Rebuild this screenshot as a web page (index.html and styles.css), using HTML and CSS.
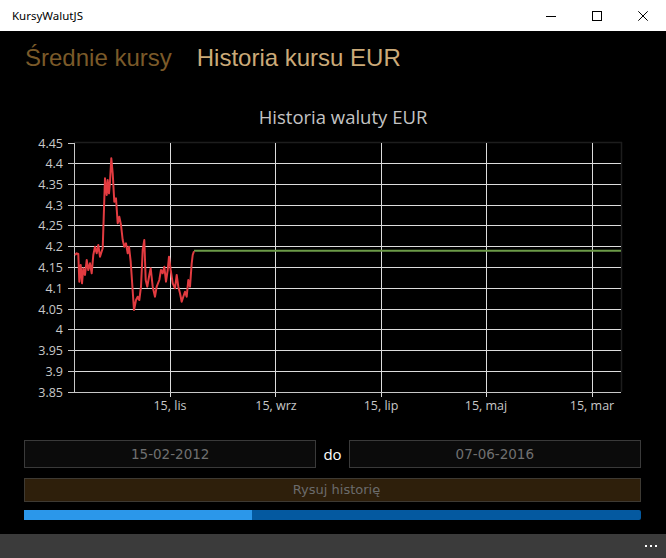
FILE: index.html
```html
<!DOCTYPE html>
<html lang="pl">
<head>
<meta charset="utf-8">
<title>KursyWalutJS</title>
<link rel="stylesheet" href="styles.css">
</head>
<body>
<div class="app">
  <header class="titlebar">
    <span class="app-title">KursyWalutJS</span>
    <div class="win-controls">
      <span class="win-btn"><svg width="10" height="10" viewBox="0 0 10 10"><line x1="0" y1="5.5" x2="10" y2="5.5" stroke="#000" stroke-width="1"/></svg></span>
      <span class="win-btn"><svg width="10" height="10" viewBox="0 0 10 10"><rect x="0.5" y="0.5" width="9" height="9" fill="none" stroke="#000" stroke-width="1"/></svg></span>
      <span class="win-btn"><svg width="10" height="10" viewBox="0 0 10 10"><path d="M0.3 0.3 L9.7 9.7 M9.7 0.3 L0.3 9.7" stroke="#000" stroke-width="1"/></svg></span>
    </div>
  </header>

  <nav class="tabs">
    <span class="tab tab-muted">Średnie kursy</span>
    <span class="tab tab-active">Historia kursu EUR</span>
  </nav>

  <svg class="chart" width="666" height="369" viewBox="0 71 666 369">
    <text class="chart-title" x="343" y="124">Historia waluty EUR</text>

    <g class="frame">
      <line x1="74" y1="142.5" x2="622" y2="142.5"/>
      <line x1="621.5" y1="142" x2="621.5" y2="392"/>
    </g>

    <g class="grid">
      <line x1="74" y1="163.5" x2="621" y2="163.5"/>
      <line x1="74" y1="184.5" x2="621" y2="184.5"/>
      <line x1="74" y1="205.5" x2="621" y2="205.5"/>
      <line x1="74" y1="225.5" x2="621" y2="225.5"/>
      <line x1="74" y1="246.5" x2="621" y2="246.5"/>
      <line x1="74" y1="267.5" x2="621" y2="267.5"/>
      <line x1="74" y1="288.5" x2="621" y2="288.5"/>
      <line x1="74" y1="309.5" x2="621" y2="309.5"/>
      <line x1="74" y1="329.5" x2="621" y2="329.5"/>
      <line x1="74" y1="350.5" x2="621" y2="350.5"/>
      <line x1="74" y1="371.5" x2="621" y2="371.5"/>
      <line x1="170.5" y1="143" x2="170.5" y2="397"/>
      <line x1="275.5" y1="143" x2="275.5" y2="397"/>
      <line x1="381.5" y1="143" x2="381.5" y2="397"/>
      <line x1="486.5" y1="143" x2="486.5" y2="397"/>
      <line x1="592.5" y1="143" x2="592.5" y2="397"/>
    </g>

    <g class="axis">
      <line x1="74.5" y1="143" x2="74.5" y2="393"/>
      <line x1="74" y1="392.5" x2="621" y2="392.5"/>
      <line x1="68" y1="143.5" x2="74" y2="143.5"/>
      <line x1="68" y1="163.5" x2="74" y2="163.5"/>
      <line x1="68" y1="184.5" x2="74" y2="184.5"/>
      <line x1="68" y1="205.5" x2="74" y2="205.5"/>
      <line x1="68" y1="225.5" x2="74" y2="225.5"/>
      <line x1="68" y1="246.5" x2="74" y2="246.5"/>
      <line x1="68" y1="267.5" x2="74" y2="267.5"/>
      <line x1="68" y1="288.5" x2="74" y2="288.5"/>
      <line x1="68" y1="309.5" x2="74" y2="309.5"/>
      <line x1="68" y1="329.5" x2="74" y2="329.5"/>
      <line x1="68" y1="350.5" x2="74" y2="350.5"/>
      <line x1="68" y1="371.5" x2="74" y2="371.5"/>
      <line x1="68" y1="392.5" x2="74" y2="392.5"/>
    </g>

    <g class="ylabels">
      <text x="63" y="143.5">4.45</text>
      <text x="63" y="163.5">4.4</text>
      <text x="63" y="184.5">4.35</text>
      <text x="63" y="205.5">4.3</text>
      <text x="63" y="225.5">4.25</text>
      <text x="63" y="246.5">4.2</text>
      <text x="63" y="267.5">4.15</text>
      <text x="63" y="288.5">4.1</text>
      <text x="63" y="309.5">4.05</text>
      <text x="63" y="329.5">4</text>
      <text x="63" y="350.5">3.95</text>
      <text x="63" y="371.5">3.9</text>
      <text x="63" y="392.5">3.85</text>
    </g>

    <g class="xlabels">
      <text x="170" y="410">15, lis</text>
      <text x="276" y="410">15, wrz</text>
      <text x="381" y="410">15, lip</text>
      <text x="486" y="410">15, maj</text>
      <text x="592" y="410">15, mar</text>
    </g>

    <line class="series-green" x1="194" y1="250.8" x2="621" y2="250.8"/>
    <polyline class="series-red" points="75,255 76.7,253.3 78.3,254 79.3,281.7 80.7,265 82,283.3 83.3,268.3 85,275 86.7,260 88.3,270 90,263.3 91.7,273.3 93.3,255 95,246.7 96.7,253.3 98.3,245 100,256.7 102.7,248.3 105,178.3 106.7,195 107.7,180 109,193.3 110,181.7 111.3,158.3 112.7,173.3 114.3,201.7 116,198.3 117.7,223.3 119.3,216.7 121,225 122.7,240 124.3,246.7 126,243.3 127.7,253.3 129,246.7 130.7,261.7 134,310 136,300 137.7,296.7 139.3,300 141,286.7 142.7,250 144.3,240 145.7,280 147.3,286.7 149.3,275 150.7,268.3 152.7,286.7 155,296.7 156.7,286.7 159.3,280 161,270 162.7,273.3 164.3,266.7 166,281.7 167.7,270 169,256.7 170.7,270 172.7,283.3 175,288.3 176.7,275 178.3,286.7 180,293.3 181.7,301.7 183.3,296.7 185,291.7 186.7,296.7 188.3,280 190,286.7 191.7,263.3 192.7,255 194,251.2"/>
  </svg>

  <section class="controls">
    <div class="date-row">
      <div class="date-input">15-02-2012</div>
      <span class="date-sep">do</span>
      <div class="date-input">07-06-2016</div>
    </div>
    <button class="draw-btn" type="button">Rysuj historię</button>
    <div class="progress"><div class="progress-fill" style="width:36.95%"></div></div>
  </section>

  <footer class="appbar">
    <span class="more"><i></i><i></i><i></i></span>
  </footer>
</div>
</body>
</html>
```

FILE: styles.css
```css
* { box-sizing: border-box; }

html, body {
  margin: 0;
  padding: 0;
  background: #000;
}

.app {
  width: 666px;
  height: 558px;
  display: flex;
  flex-direction: column;
  overflow: hidden;
  background: #000;
}

.titlebar {
  height: 31px;
  flex: 0 0 31px;
  background: #fff;
  display: flex;
  align-items: center;
  justify-content: space-between;
}

.app-title {
  font-family: "Noto Sans", "Open Sans", sans-serif;
  font-size: 11.5px;
  color: #000;
  padding-left: 12px;
  padding-bottom: 1px;
}

.win-controls {
  display: flex;
  height: 31px;
}

.win-btn {
  width: 46px;
  height: 31px;
  display: flex;
  align-items: center;
  justify-content: center;
}

.win-btn svg { display: block; }

.tabs {
  display: flex;
  gap: 25px;
  padding: 13px 0 0 25px;
  height: 40px;
  flex: 0 0 40px;
  font-family: "Liberation Sans", Arial, sans-serif;
  font-size: 24px;
  line-height: 28px;
  white-space: nowrap;
}

.tab-muted { color: #7b5a29; }
.tab-active { color: #cbaa78; }

.chart {
  display: block;
  flex: 0 0 369px;
}

.chart-title {
  font-family: "Open Sans", "Noto Sans", sans-serif;
  font-size: 18.5px;
  fill: #c4c4c4;
  text-anchor: middle;
}

.frame line {
  stroke: #1d1d1d;
  stroke-width: 1.5;
}

.grid line {
  stroke: #dcdcdc;
  stroke-width: 1;
}

.axis line {
  stroke: #c8c8c8;
  stroke-width: 1;
}

.ylabels text {
  font-family: "Open Sans", "Noto Sans", sans-serif;
  font-size: 12.5px;
  fill: #c8c8c8;
  text-anchor: end;
  dominant-baseline: central;
}

.xlabels text {
  font-family: "Open Sans", "Noto Sans", sans-serif;
  font-size: 12.5px;
  fill: #c8c8c8;
  text-anchor: middle;
}

.series-green {
  stroke: #6c9b48;
  stroke-width: 2;
}

.series-red {
  fill: none;
  stroke: #e23b40;
  stroke-width: 2;
  stroke-linejoin: round;
}

.controls {
  padding: 0 25px 0 24px;
  display: flex;
  flex-direction: column;
}

.date-row {
  display: flex;
  align-items: center;
  gap: 7px;
  height: 28px;
}

.date-input {
  flex: 1 1 0;
  height: 28px;
  background: #0b0b0b;
  border: 1px solid #3a3a3a;
  color: #707070;
  font-family: "DejaVu Sans", sans-serif;
  font-size: 13.5px;
  line-height: 26px;
  text-align: center;
}

.date-sep {
  font-family: "Open Sans", "Noto Sans", sans-serif;
  font-size: 15px;
  color: #fff;
  line-height: 28px;
}

.draw-btn {
  margin-top: 10px;
  height: 24px;
  width: 100%;
  background: #2e1f0b;
  border: 1px solid #3e3a33;
  color: #6b6b6b;
  font-family: "DejaVu Sans", sans-serif;
  font-size: 13px;
  line-height: 22px;
  padding: 0 0 0 8px;
  text-align: center;
}

.progress {
  margin-top: 8px;
  height: 10px;
  background: #0459a0;
  border-radius: 0 2px 2px 0;
  overflow: hidden;
}

.progress-fill {
  height: 100%;
  background: #2b97ea;
}

.appbar {
  margin-top: auto;
  height: 24px;
  flex: 0 0 24px;
  background: #3b3b3b;
  display: flex;
  justify-content: flex-end;
  align-items: center;
}

.more {
  display: flex;
  gap: 3px;
  padding-right: 9px;
}

.more i {
  display: block;
  width: 2px;
  height: 2px;
  background: #fff;
}
```
